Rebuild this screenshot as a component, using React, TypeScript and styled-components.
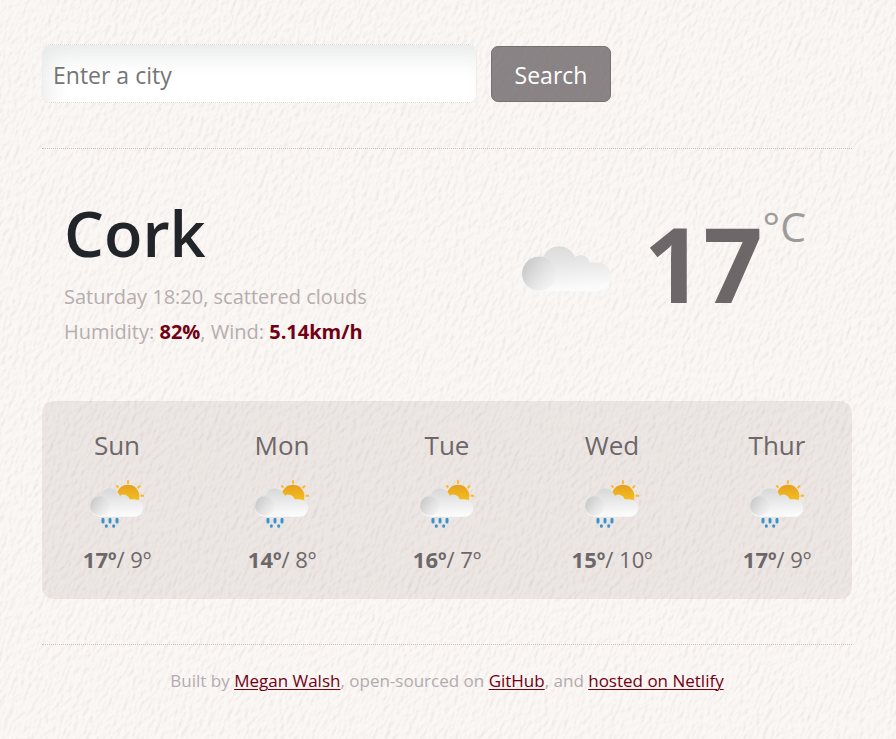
import React, { useState } from "react";
import styled, { createGlobalStyle } from "styled-components";

const paper = `<svg xmlns="http://www.w3.org/2000/svg" width="1600" height="1200"><filter id="p" x="0" y="0" width="100%" height="100%" color-interpolation-filters="sRGB"><feTurbulence type="fractalNoise" baseFrequency="0.26 0.13" numOctaves="4" seed="7" result="n"/><feDiffuseLighting in="n" surfaceScale="1.4" diffuseConstant="1.15" lighting-color="#fff8f4"><feDistantLight azimuth="200" elevation="60"/></feDiffuseLighting></filter><rect width="1600" height="1200" fill="#faf6f3"/><g opacity="0.13"><rect x="-900" y="-900" width="3200" height="2800" filter="url(#p)" transform="rotate(22)"/></g></svg>`;

const GlobalStyle = createGlobalStyle`
  *, *::before, *::after { box-sizing: border-box; }
  body {
    margin: 0;
    min-height: 100vh;
    background: #f8f4f1 url("data:image/svg+xml,${encodeURIComponent(paper)}");
    color: #212529;
    font-family: "Segoe UI", "Open Sans", "Noto Sans", sans-serif;
    font-size: 16px;
    line-height: 24px;
  }
`;

const Page = styled.main`
  padding: 44px 44px 40px 42px;
`;

const SearchForm = styled.form`
  display: flex;
  align-items: center;
  gap: 14px;
  padding-bottom: 45px;
  border-bottom: 1px dotted #c9c0bf;
`;

const CityInput = styled.input`
  flex: 0 1 435px;
  min-width: 0;
  height: 59px;
  padding: 2px 10px 0;
  border: 1px dotted #dcdcdc;
  border-radius: 8px;
  background: #fff;
  box-shadow: inset 9px 16px 24px -6px rgba(60, 66, 66, 0.12);
  color: #212529;
  font: inherit;
  font-size: 23px;
  &::placeholder {
    color: #757575;
    opacity: 1;
  }
`;

const SearchButton = styled.button`
  width: 120px;
  height: 56px;
  padding: 2px 0 0;
  border: 1px solid #787173;
  border-radius: 7px;
  background: rgba(109, 103, 105, 0.8);
  color: #fff;
  font: inherit;
  font-size: 23px;
  cursor: pointer;
`;

const Current = styled.section`
  display: flex;
  justify-content: space-between;
  padding: 46px 46px 52px 22px;
`;

const City = styled.h1`
  margin: 0 0 8px;
  font-size: 63px;
  font-weight: 600;
  line-height: 76px;
`;

const Detail = styled.p`
  margin: 0;
  color: #b5adae;
  font-size: 20px;
  line-height: 35px;
  strong {
    color: #710014;
    font-weight: 700;
  }
`;

const Reading = styled.div`
  display: flex;
  align-items: flex-start;
`;

const CurrentIcon = styled.svg`
  width: 90px;
  height: 50px;
  margin: 48px 32px 0 0;
`;

const Temperature = styled.strong`
  color: #6d6769;
  font-size: 104px;
  font-weight: 700;
  line-height: 136px;
`;

const Unit = styled.span`
  margin-top: 7px;
  color: #9f9a9a;
  font-size: 41px;
  font-weight: 400;
  line-height: 48px;
`;

const Forecast = styled.section`
  display: grid;
  grid-template-columns: repeat(5, 1fr);
  gap: 15px;
  padding: 23px 0 24px;
  border-radius: 12px;
  background: rgba(115, 92, 88, 0.1);
`;

const Day = styled.article`
  display: flex;
  flex-direction: column;
  align-items: center;
  color: #6d6769;
`;

const DayName = styled.h2`
  margin: 0;
  font-size: 26px;
  font-weight: 400;
  line-height: 42px;
`;

const DayIcon = styled.svg`
  width: 54px;
  height: 52px;
  margin: 12px 0 13px;
`;

const Range = styled.p`
  margin: 0;
  font-size: 22px;
  line-height: 32px;
`;

const Credits = styled.footer`
  margin-top: 45px;
  padding-top: 24px;
  border-top: 1px dotted #c9c0bf;
  color: #b3abb0;
  font-size: 17px;
  font-weight: 400;
  text-align: center;
  a {
    color: #710014;
    text-decoration-thickness: 1px;
    text-underline-offset: 2px;
  }
`;

function CloudIcon() {
  return (
    <CurrentIcon viewBox="42 28 264 144" role="img" aria-label="Scattered clouds">
      <defs>
        <linearGradient id="cloudBody" x1="0" y1="0" x2="0.15" y2="1">
          <stop offset="0" stopColor="#d9d9d9" />
          <stop offset="0.5" stopColor="#e9e9e9" />
          <stop offset="1" stopColor="#fbfbfb" />
        </linearGradient>
        <linearGradient id="cloudPuff" x1="0.1" y1="0.3" x2="0.85" y2="0.75">
          <stop offset="0" stopColor="#cccccc" />
          <stop offset="1" stopColor="#e9e9e9" stopOpacity="0.4" />
        </linearGradient>
      </defs>
      <path
        fill="url(#cloudBody)"
        d="M94 168A51 51 0 1 1 104 67A51 51 0 0 1 198 68A26 26 0 0 1 240 84H262A42 42 0 0 1 262 168Z"
      />
      <circle cx="92" cy="117" r="50" fill="url(#cloudPuff)" />
    </CurrentIcon>
  );
}

function RainIcon({ id }: { id: string }) {
  return (
    <DayIcon viewBox="180 262 162 156" role="img" aria-label="Rain showers">
      <defs>
        <linearGradient id={`${id}-body`} x1="0" y1="0" x2="0.1" y2="1">
          <stop offset="0" stopColor="#d6d6d6" />
          <stop offset="0.5" stopColor="#e9e9e9" />
          <stop offset="1" stopColor="#fbfbfb" />
        </linearGradient>
        <linearGradient id={`${id}-puff`} x1="0.1" y1="0.3" x2="0.9" y2="0.75">
          <stop offset="0" stopColor="#cccccc" />
          <stop offset="1" stopColor="#e9e9e9" stopOpacity="0.5" />
        </linearGradient>
        <linearGradient id={`${id}-sun`} x1="0" y1="0" x2="0" y2="1">
          <stop offset="0" stopColor="#e5a020" />
          <stop offset="1" stopColor="#fbcc1b" />
        </linearGradient>
      </defs>
      <circle cx="294" cy="316" r="34" fill={`url(#${id}-sun)`} />
      <path
        d="M294 269V279M259 284L265 291M330 285L323 292M332 315H342"
        stroke="#fbb929"
        strokeWidth="6"
      />
      <path
        fill={`url(#${id}-body)`}
        d="M210 378A32 32 0 1 1 212 314C221 289 253 285 270 315A19 19 0 0 1 299 326H314A26 26 0 0 1 314 378Z"
      />
      <circle cx="209" cy="346" r="29" fill={`url(#${id}-puff)`} />
      <path d="M219 386V394M240 386V394M261 386V394" stroke="#3994cd" strokeWidth="9" strokeLinecap="round" />
      <path d="M229 405V407M251 405V407" stroke="#3994cd" strokeWidth="9" strokeLinecap="round" />
    </DayIcon>
  );
}

const days = [
  { name: "Sun", high: 17, low: 9 },
  { name: "Mon", high: 14, low: 8 },
  { name: "Tue", high: 16, low: 7 },
  { name: "Wed", high: 15, low: 10 },
  { name: "Thur", high: 17, low: 9 },
];

export default function App() {
  const [query, setQuery] = useState("");
  return (
    <>
      <GlobalStyle />
      <Page>
        <SearchForm onSubmit={(event) => event.preventDefault()}>
          <CityInput
            type="text"
            aria-label="Enter a city"
            placeholder="Enter a city"
            value={query}
            onChange={(event) => setQuery(event.target.value)}
          />
          <SearchButton type="submit">Search</SearchButton>
        </SearchForm>
        <Current>
          <div>
            <City>Cork</City>
            <Detail>Saturday 18:20, scattered clouds</Detail>
            <Detail>
              Humidity: <strong>82%</strong>, Wind: <strong>5.14km/h</strong>
            </Detail>
          </div>
          <Reading>
            <CloudIcon />
            <Temperature>17</Temperature>
            <Unit>°C</Unit>
          </Reading>
        </Current>
        <Forecast aria-label="Five day forecast">
          {days.map((day) => (
            <Day key={day.name}>
              <DayName>{day.name}</DayName>
              <RainIcon id={day.name} />
              <Range>
                <strong>{day.high}º</strong>/ {day.low}º
              </Range>
            </Day>
          ))}
        </Forecast>
        <Credits>
          Built by <a href="#author">Megan Walsh</a>, open-sourced on <a href="#github">GitHub</a>, and{" "}
          <a href="#netlify">hosted on Netlify</a>
        </Credits>
      </Page>
    </>
  );
}
